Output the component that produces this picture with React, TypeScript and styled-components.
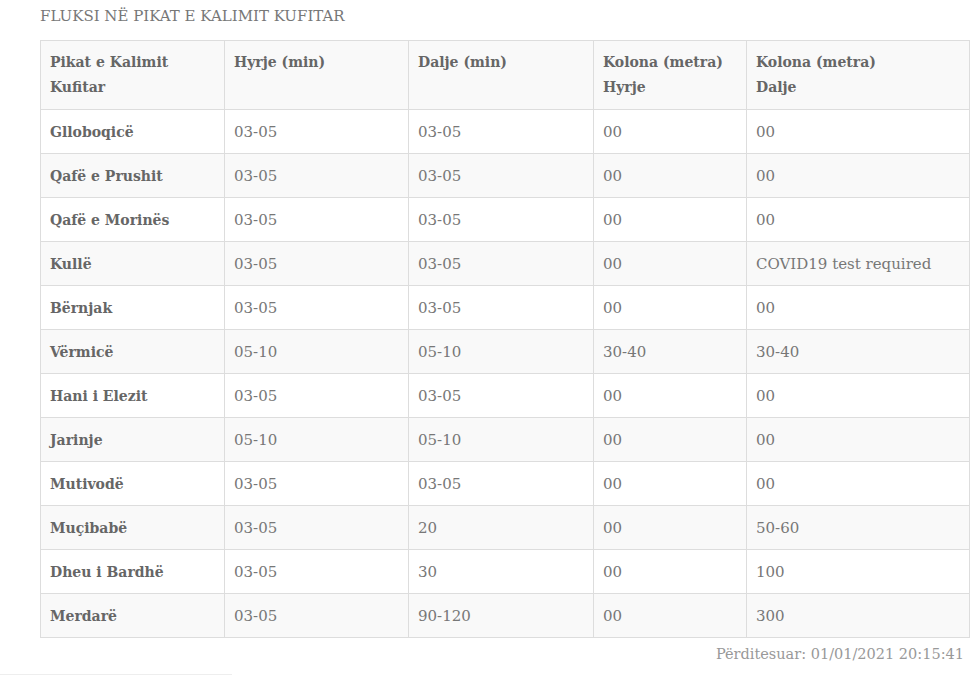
import React from "react";
import styled, { createGlobalStyle } from "styled-components";

const Global = createGlobalStyle`
  html, body { margin: 0; padding: 0; background: #fff; }
  body { font-family: "DejaVu Serif", "Liberation Serif", serif; color: #666; }
`;

const Page = styled.div`
  width: 980px;
  height: 675px;
  box-sizing: border-box;
  padding: 6px 11px 0 40px;
  position: relative;
  overflow: hidden;
`;

const Title = styled.h2`
  margin: 0 0 14px 0;
  height: 20px;
  line-height: 20px;
  font-size: 15px;
  font-weight: normal;
  color: #777;
  letter-spacing: 0;
`;

const Table = styled.table`
  width: 929px;
  border-collapse: collapse;
  table-layout: fixed;
  border: 1px solid #ddd;
`;

const Row = styled.tr<{ $shade: boolean }>`
  background: ${(p) => (p.$shade ? "#f9f9f9" : "#fff")};
`;

const HeadCell = styled.th`
  text-align: left;
  vertical-align: top;
  font-weight: bold;
  font-size: 14px;
  line-height: 25px;
  color: #666;
  padding: 9px 9px 9px 9px;
  border: 1px solid #ddd;
  height: 50px;
`;

const Cell = styled.td<{ $bold?: boolean }>`
  font-size: ${(p) => (p.$bold ? "14px" : "15px")};
  font-weight: ${(p) => (p.$bold ? "bold" : "normal")};
  color: ${(p) => (p.$bold ? "#666" : "#777")};
  padding: 0 9px;
  height: 43px;
  border: 1px solid #ddd;
  vertical-align: middle;
  white-space: nowrap;
`;

const Footer = styled.div`
  text-align: right;
  padding-right: 5px;
  margin-top: 5px;
  font-size: 14.5px;
  color: #999;
  line-height: 22px;
`;

const BottomRule = styled.div`
  position: absolute;
  left: 0;
  bottom: 0;
  width: 232px;
  height: 1px;
  background: #eee;
`;

const widths = [184, 184, 185, 153, 223];

const rows: string[][] = [
  ["Glloboqicë", "03-05", "03-05", "00", "00"],
  ["Qafë e Prushit", "03-05", "03-05", "00", "00"],
  ["Qafë e Morinës", "03-05", "03-05", "00", "00"],
  ["Kullë", "03-05", "03-05", "00", "COVID19 test required"],
  ["Bërnjak", "03-05", "03-05", "00", "00"],
  ["Vërmicë", "05-10", "05-10", "30-40", "30-40"],
  ["Hani i Elezit", "03-05", "03-05", "00", "00"],
  ["Jarinje", "05-10", "05-10", "00", "00"],
  ["Mutivodë", "03-05", "03-05", "00", "00"],
  ["Muçibabë", "03-05", "20", "00", "50-60"],
  ["Dheu i Bardhë", "03-05", "30", "00", "100"],
  ["Merdarë", "03-05", "90-120", "00", "300"],
];

export default function App() {
  return (
    <>
      <Global />
      <Page>
        <Title>FLUKSI NË PIKAT E KALIMIT KUFITAR</Title>
        <Table>
          <colgroup>
            {widths.map((w, i) => (
              <col key={i} style={{ width: w }} />
            ))}
          </colgroup>
          <thead>
            <Row $shade>
              <HeadCell>Pikat e Kalimit<br />Kufitar</HeadCell>
              <HeadCell>Hyrje (min)</HeadCell>
              <HeadCell>Dalje (min)</HeadCell>
              <HeadCell>Kolona (metra)<br />Hyrje</HeadCell>
              <HeadCell>Kolona (metra)<br />Dalje</HeadCell>
            </Row>
          </thead>
          <tbody>
            {rows.map((r, i) => (
              <Row key={i} $shade={i % 2 === 1}>
                {r.map((c, j) => (
                  <Cell key={j} $bold={j === 0}>{c}</Cell>
                ))}
              </Row>
            ))}
          </tbody>
        </Table>
        <Footer>Përditesuar: 01/01/2021 20:15:41</Footer>
        <BottomRule />
      </Page>
    </>
  );
}
